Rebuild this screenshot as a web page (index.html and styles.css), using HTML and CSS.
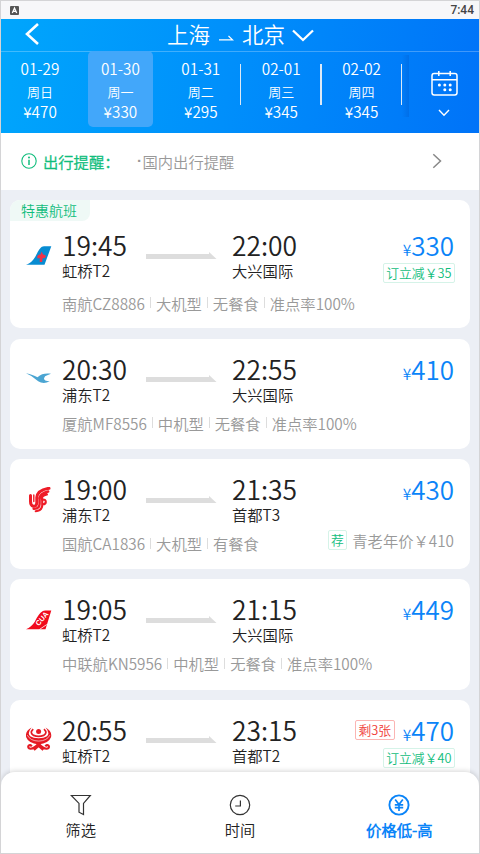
FILE: index.html
```html
<!DOCTYPE html>
<html lang="zh-CN">
<head>
<meta charset="utf-8">
<title>上海 - 北京</title>
<link rel="stylesheet" href="styles.css">
</head>
<body>
<div class="status">
  <svg width="9" height="9" viewBox="0 0 9 9"><rect width="9" height="9" rx="1" fill="#555"/><path d="M2.3 7 4.5 2 6.7 7M3.2 5.4h2.6" fill="none" stroke="#fff" stroke-width="1.3"/></svg>
  <span class="clock">7:44</span>
</div>
<header class="header">
  <div class="titlebar">
    <svg class="back" width="16" height="24" viewBox="0 0 16 24"><path d="M14 2 3 12 14 22" fill="none" stroke="#fff" stroke-width="2.6"/></svg>
    <div class="route">
      <span>上海</span>
      <svg class="to" width="15" height="6" viewBox="0 0 15 6"><path d="M0 4.8H13.5L9.5 1" fill="none" stroke="#fff" stroke-width="1.2"/></svg>
      <span>北京</span>
      <svg class="down" width="22" height="13" viewBox="0 0 22 13"><path d="M1 1.5 11 11 21 1.5" fill="none" stroke="#fff" stroke-width="2.3"/></svg>
    </div>
  </div>
  <div class="dates">
    <div class="date"><b>01-29</b><i>周日</i><b class="fare">¥470</b></div>
    <div class="date selected"><b>01-30</b><i>周一</i><b class="fare">¥330</b></div>
    <div class="date ruled"><b>01-31</b><i>周二</i><b class="fare">¥295</b></div>
    <div class="date ruled"><b>02-01</b><i>周三</i><b class="fare">¥345</b></div>
    <div class="date ruled"><b>02-02</b><i>周四</i><b class="fare">¥345</b></div>
    <div class="fade"></div>
    <div class="calendar">
      <svg width="27" height="26" viewBox="0 0 27 26"><g fill="none" stroke="#fff" stroke-width="1.5"><rect x="1" y="3.5" width="25" height="21.5" rx="2.2"/><path d="M1 9.8h25M7.8 1v5M19.2 1v5"/></g><g fill="#fff"><circle cx="8.4" cy="15" r="1.5"/><circle cx="13.8" cy="15" r="1.5"/><circle cx="19.2" cy="15" r="1.5"/><circle cx="13.8" cy="19.8" r="1.5"/><circle cx="19.2" cy="19.8" r="1.5"/></g></svg>
      <svg width="12" height="8" viewBox="0 0 12 8"><path d="M1 1 6 6.3 11 1" fill="none" stroke="#fff" stroke-width="1.4"/></svg>
    </div>
  </div>
</header>
<div class="notice">
  <svg width="16" height="16" viewBox="0 0 16 16"><circle cx="8" cy="8" r="7.2" fill="none" stroke="#10bd7c" stroke-width="1.1"/><path d="M8 6.7V12" fill="none" stroke="#10bd7c" stroke-width="1.5"/><circle cx="8" cy="4.4" r="1" fill="#10bd7c"/></svg>
  <span class="notice-label">出行提醒：</span>
  <span class="notice-text"><span class="dot">·</span>国内出行提醒</span>
  <svg class="more" width="10" height="16" viewBox="0 0 10 16"><path d="M1.3 1.3 8.5 8 1.3 14.7" fill="none" stroke="#888" stroke-width="1.5"/></svg>
</div>
<main class="flights">
  <article class="card special">
    <div class="ribbon">特惠航班</div>
    <div class="legs">
      <svg class="logo" width="26" height="26" viewBox="0 0 26 26"><path d="M0 21.8C6 19.5 7.5 17 11 10.5 13 6.5 15 3.4 18 3.3H25.3L18.5 21.8Z" fill="#078cd2"/><path d="M11.2 13.2q1.2-2.2 3.3-1.6l1.2-3 1.3 2.8q2.4-.2 3 2l-1.4 1.8-1.8-.1-.7 4h-2.4l.1-4-2.2.4Z" fill="#ef3349"/></svg>
      <div class="stop"><strong>19:45</strong><span>虹桥T2</span></div>
      <svg class="arrow" width="71" height="8" viewBox="0 0 71 8"><path d="M0 2H63V0L70.5 7H0Z" fill="#ddd"/></svg>
      <div class="stop"><strong>22:00</strong><span>大兴国际</span></div>
      <div class="cost"><div class="price"><small>¥</small>330</div><span class="tag">订立减￥35</span></div>
    </div>
    <div class="info"><span>南航CZ8886</span><span>大机型</span><span>无餐食</span><span>准点率100%</span></div>
  </article>
  <article class="card">
    <div class="legs">
      <svg class="logo" width="26" height="26" viewBox="0 0 26 26"><path d="M0 7.3C5 8 8 9.6 11.5 11.3 15.5 7.7 18.5 7.3 25 7.7L21.3 9.2Q18.6 9.9 18 12.2 17.8 15 23.7 15.3 17.5 18.8 12.2 15.2 6.4 9.8 0 7.3Z" fill="#4ba5d2"/></svg>
      <div class="stop"><strong>20:30</strong><span>浦东T2</span></div>
      <svg class="arrow" width="71" height="8" viewBox="0 0 71 8"><path d="M0 2H63V0L70.5 7H0Z" fill="#ddd"/></svg>
      <div class="stop"><strong>22:55</strong><span>大兴国际</span></div>
      <div class="cost"><div class="price"><small>¥</small>410</div></div>
    </div>
    <div class="info"><span>厦航MF8556</span><span>中机型</span><span>无餐食</span><span>准点率100%</span></div>
  </article>
  <article class="card">
    <div class="legs">
      <svg class="logo" width="26" height="26" viewBox="0 0 26 26"><g fill="none" stroke="#ee1c27" stroke-linecap="round"><path d="M4.5 8.5V14Q4.4 18.5 7.3 19.3 10.6 19.8 10.8 15.5V10.5Q11.5 3 23 1.3" stroke-width="3"/><path d="M7.8 8V14.5" stroke-width="1.4"/><path d="M13.6 11V17Q13.4 22 7.6 21.8" stroke-width="2.4"/><path d="M13.6 11Q14 6.3 22.2 4.5M16 12.2Q15 8.6 20.8 7.4" stroke-width="2.4"/><path d="M16 12.6Q19.8 12 19.8 15 19.4 17.6 16.5 17.2M16.2 13V19Q15.5 23.7 9.7 24.2" stroke-width="2.1"/></g></svg>
      <div class="stop"><strong>19:00</strong><span>浦东T2</span></div>
      <svg class="arrow" width="71" height="8" viewBox="0 0 71 8"><path d="M0 2H63V0L70.5 7H0Z" fill="#ddd"/></svg>
      <div class="stop"><strong>21:35</strong><span>首都T3</span></div>
      <div class="cost"><div class="price"><small>¥</small>430</div></div>
    </div>
    <div class="info"><span>国航CA1836</span><span>大机型</span><span>有餐食</span><div class="offer"><em class="tag rec">荐</em>青老年价￥410</div></div>
  </article>
  <article class="card">
    <div class="legs">
      <svg class="logo" width="26" height="26" viewBox="0 0 26 26"><path d="M0 22.3Q5.5 20 8.6 15 12.5 6.7 16.5 4.2 17.5 3.5 19.5 3.5H25.3L19.5 22.3Z" fill="#f10a1c"/><path d="M13.4 22.5 20.8 17.5" stroke="#fff" stroke-width=".8"/><text class="cua" x="0" y="0" transform="translate(12.8 19.2) rotate(-50)">CUA</text></svg>
      <div class="stop"><strong>19:05</strong><span>虹桥T2</span></div>
      <svg class="arrow" width="71" height="8" viewBox="0 0 71 8"><path d="M0 2H63V0L70.5 7H0Z" fill="#ddd"/></svg>
      <div class="stop"><strong>21:15</strong><span>大兴国际</span></div>
      <div class="cost"><div class="price"><small>¥</small>449</div></div>
    </div>
    <div class="info"><span>中联航KN5956</span><span>中机型</span><span>无餐食</span><span>准点率100%</span></div>
  </article>
  <article class="card">
    <div class="legs">
      <svg class="logo" width="26" height="26" viewBox="0 0 26 26"><circle cx="12.6" cy="4.6" r="2.5" fill="#e51a24"/><path d="M5.6 .6Q-1.3 4.5 .2 10.3 2.4 16.3 12.6 17.5 22.8 16.3 25 10.3 26.5 4.5 19.6 .6 24.4 6 21 9.2 18 11.2 12.6 11.2 7.2 11.2 4.2 9.2.8 6 5.6 .6Z" fill="#e51a24"/><g fill="none" stroke="#e51a24"><path d="M7.2 2.2Q3.2 6 7.6 8.4 10 9.4 12.6 9.4 15.2 9.4 17.6 8.4 22 6 18 2.2" stroke-width="1.7"/><path d="M12.6 16.5Q8.5 21.5 4.5 21.8 1.3 21 2.5 18.8 4.3 17.2 5.8 19.4M12.6 16.5Q16.7 21.5 20.7 21.8 23.9 21 22.7 18.8 20.9 17.2 19.4 19.4M8 23 12.6 19 17.2 23" stroke-width="2.1"/></g><path d="M1.3 8.2Q4.3 13.9 12.6 14.1 20.9 13.9 23.9 8.2" fill="none" stroke="#fff" stroke-width=".6"/></svg>
      <div class="stop"><strong>20:55</strong><span>虹桥T2</span></div>
      <svg class="arrow" width="71" height="8" viewBox="0 0 71 8"><path d="M0 2H63V0L70.5 7H0Z" fill="#ddd"/></svg>
      <div class="stop"><strong>23:15</strong><span>首都T2</span></div>
      <div class="cost"><div class="price"><em class="tag left">剩3张</em><small>¥</small>470</div><span class="tag">订立减￥40</span></div>
    </div>
  </article>
</main>
<nav class="tabs">
  <div class="tab"><svg width="22" height="22" viewBox="0 0 22 22"><path d="M1.3 1.5H20.3L13.5 9.4V20.6L9 18.2V9.4Z" fill="none" stroke="#333" stroke-width="1.2"/></svg><span>筛选</span></div>
  <div class="tab"><svg width="22" height="22" viewBox="0 0 22 22"><circle cx="11" cy="11" r="9.7" fill="none" stroke="#333" stroke-width="1.2"/><path d="M11.4 6.4V12H6.2" fill="none" stroke="#333" stroke-width="1.2"/></svg><span>时间</span></div>
  <div class="tab active"><svg width="22" height="22" viewBox="0 0 22 22"><circle cx="11" cy="11" r="9.6" fill="none" stroke="#0a84f8" stroke-width="1.9"/><path d="M7.2 5.4 11 10.6 14.8 5.4M11 10.5V17M6.8 10.8h8.4M6.8 13.6h8.4" fill="none" stroke="#0a84f8" stroke-width="1.7"/></svg><span>价格低-高</span></div>
</nav>
</body>
</html>
```
FILE: styles.css
```css
* { box-sizing: border-box; }
body {
  margin: 0;
  height: 854px;
  border: 1px solid #d4d4d6;
  display: flex;
  flex-direction: column;
  overflow: hidden;
  background: #eceff5;
  font-family: "Noto Sans CJK SC DemiLight", "Noto Sans CJK SC", sans-serif;
  font-weight: 350;
  font-size: 15.3px;
  color: #222;
}
svg { display: block; flex: none; }
b, i, em, strong { font-weight: inherit; font-style: normal; }

.status {
  flex: none;
  height: 18px;
  padding: 0 5px 0 9px;
  display: flex;
  align-items: center;
  justify-content: space-between;
  background: #f7f7f9;
}
.clock { font: 500 12px/18px Roboto, sans-serif; color: #444; }

.header {
  flex: none;
  height: 114px;
  color: #fff;
  background: linear-gradient(100deg, #00a6fc 0%, #008ffb 48%, #0073f8 100%);
}
.titlebar {
  height: 33px;
  border-bottom: 1px solid rgba(255, 255, 255, .25);
  display: flex;
  align-items: flex-start;
}
.back { margin: 3px 0 0 23px; }
.route {
  margin-left: 127px;
  display: flex;
  align-items: flex-start;
  font-size: 21.5px;
  line-height: 29px;
}
.to { margin: 16px 8px 0 9px; }
.down { margin: 10px 0 0 7px; }
.dates { display: flex; height: 81px; margin-top: -1px; }
.date {
  width: 65px;
  height: 76px;
  margin: 0 8px 0 7.4px;
  padding-top: 6px;
  text-align: center;
  position: relative;
  flex: none;
}
.date b, .date i { display: block; }
.date b { line-height: 22px; }
.date i { font-size: 13px; line-height: 18px; margin-top: 3.5px; }
.date .fare { line-height: 20px; margin-top: .5px; }
.selected { background: #42a7fa; border-radius: 5px; }
.date:first-child { margin-left: 6.5px; }
.ruled::after {
  content: "";
  position: absolute;
  left: 71.5px;
  top: 13px;
  width: 1.5px;
  height: 41px;
  background: #dce9f6;
}
.fade {
  width: 7px;
  height: 62px;
  margin-top: 4px;
  background: linear-gradient(90deg, rgba(0, 80, 190, 0), rgba(0, 80, 190, .28));
}
.calendar {
  flex: 1;
  padding-top: 19px;
  display: flex;
  flex-direction: column;
  align-items: center;
  gap: 13px;
}

.notice {
  flex: none;
  height: 57px;
  padding: 0 37px 2px 20px;
  display: flex;
  align-items: center;
  background: #fff;
  line-height: 22px;
}
.notice-label {
  margin-left: 6px;
  width: 88px;
  color: #10bd7c;
  font-weight: 400;
  -webkit-text-stroke: .3px #10bd7c;
}
.notice-text { margin-left: 6px; color: #999; display: flex; }
.dot { width: 5.5px; font-family: "Liberation Sans", sans-serif; font-weight: 700; }
.more { margin-left: auto; }

.flights {
  flex: 1;
  min-height: 0;
  overflow: hidden;
  margin-bottom: -14px;
  padding: 10px 9px 0;
  display: flex;
  flex-direction: column;
  gap: 10.3px;
}
.card {
  flex: none;
  height: 110.1px;
  padding: 15px 16px 0;
  border-radius: 10px;
  background: #fff;
}
.special { height: 128.4px; padding-top: 0; }
.ribbon {
  width: 80px;
  height: 21px;
  margin: 0 0 9.3px -16px;
  padding-left: 11px;
  border-radius: 10px 0 8px 0;
  background: #eff9f6;
  color: #10bd7c;
  font-size: 14px;
  font-weight: 400;
  line-height: 20px;
}
.legs { display: grid; grid-template-columns: 36px 84px 86px 1fr auto; }
.logo { margin-top: 12.5px; }
.arrow { margin-top: 21.5px; }
.stop { display: flex; flex-direction: column; }
.stop strong { font-size: 26.4px; line-height: 30px; }
.stop span { line-height: 22px; margin-top: -1px; }
.cost { display: flex; flex-direction: column; align-items: flex-end; }
.price {
  display: flex;
  align-items: baseline;
  color: #0a84f8;
  font-size: 26px;
  line-height: 30px;
}
.price small { font-size: 15.5px; line-height: 20px; }
.tag {
  height: 20px;
  padding: 0 2.5px;
  border: 1px solid #d5f3e8;
  border-radius: 2px;
  color: #10bd7c;
  font-size: 12.8px;
  font-weight: 400;
  line-height: 18px;
}
.cost > .tag { margin: 3px -1px 0 0; }
.price .left { align-self: center; margin: 0 8px 0 0; border-color: #fbb5b3; color: #f03a36; }
.info {
  margin-top: 7px;
  height: 22px;
  padding-left: 36px;
  display: flex;
  align-items: center;
  color: #999;
  line-height: 22px;
}
.special .info { margin-top: 8.5px; }
.info span + span { display: flex; align-items: center; }
.info span + span::before {
  content: "";
  width: 1px;
  height: 11px;
  margin: 0 5px;
  background: #ddd;
}
.offer { margin: -6px 0 0 auto; display: flex; align-items: center; gap: 5px; }
.cua { font: 700 7.2px "Liberation Sans", sans-serif; fill: #fff; }

.tabs {
  flex: none;
  position: relative;
  height: 81px;
  padding-top: 22px;
  display: flex;
  background: #fff;
  border-radius: 14px 14px 0 0;
  box-shadow: 0 -1px 5px rgba(0, 0, 0, .16);
}
.tab {
  flex: 1;
  display: flex;
  flex-direction: column;
  align-items: center;
  gap: 2px;
  line-height: 22px;
}
.active { color: #0a84f8; font-weight: 700; }
```
